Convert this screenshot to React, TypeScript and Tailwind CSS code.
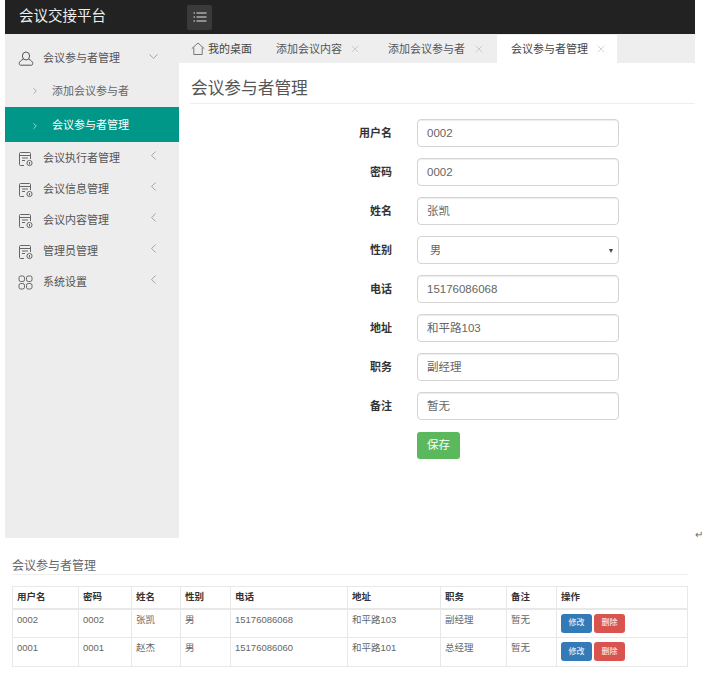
import { ChevronDown, ChevronLeft, ChevronRight, X } from 'lucide-react';

const fontStack = "font-['Liberation_Sans','Noto_Sans_CJK_SC',sans-serif]";

const UserIcon = () => (
  <svg width="16" height="16" viewBox="0 0 16 16" fill="none" stroke="#555" strokeWidth="1">
    <ellipse cx="8" cy="5" rx="3.6" ry="4" />
    <path d="M5.4 8.2C3 9.2 1.2 10.8 1.2 12.6c0 1 .6 1.6 1.6 1.6h10.4c1 0 1.6-.6 1.6-1.6 0-1.8-1.8-3.4-4.2-4.4" />
  </svg>
);

const DocIcon = () => (
  <svg width="16" height="16" viewBox="0 0 16 16" fill="none" stroke="#666" strokeWidth="1">
    <path d="M6 14.5H2.5a1 1 0 0 1-1-1v-11a1 1 0 0 1 1-1h9a1 1 0 0 1 1 1V8" />
    <path d="M1.5 4.5h11M4 7h6M4 9.5h3" />
    <circle cx="11.5" cy="12" r="2.6" />
    <path d="M11.5 11v2.5" />
  </svg>
);

const GridIcon = () => (
  <svg width="15" height="15" viewBox="0 0 15 15" fill="none" stroke="#666" strokeWidth="1">
    <rect x="1" y="1" width="5.5" height="5.5" rx="1.8" />
    <rect x="8.5" y="1" width="5.5" height="5.5" rx="1.8" />
    <rect x="1" y="8.5" width="5.5" height="5.5" rx="1.8" />
    <rect x="8.5" y="8.5" width="5.5" height="5.5" rx="1.8" />
  </svg>
);

const HomeIcon = () => (
  <svg width="14" height="14" viewBox="0 0 14 14" fill="none" stroke="#777" strokeWidth="1">
    <path d="M0.8 6.6 7 1l6.2 5.6" />
    <path d="M2.8 5.4v7.1h8.4V5.4" />
  </svg>
);

const MenuIcon = () => (
  <svg width="14" height="12" viewBox="0 0 14 12" fill="none" stroke="#e4e4e4" strokeWidth="1.2">
    <path d="M0.5 2h1.5M0.5 6h1.5M0.5 10h1.5" />
    <path d="M3.5 2h10M3.5 6h10M3.5 10h10" />
  </svg>
);

const SideRow = ({ icon, label, open }: { icon: React.ReactNode; label: string; open?: boolean }) => (
  <div className="flex h-[31px] items-center pl-[13px] pt-[2px] text-[11px] text-[#555]">
    <span className="flex w-[25px] items-center">{icon}</span>
    <span className="w-[105px] whitespace-nowrap">{label}</span>
    {open ? (
      <ChevronDown size={15} strokeWidth={1} color="#777" className="-mt-[5px] -ml-[2px]" />
    ) : (
      <ChevronLeft size={15} strokeWidth={1} color="#777" className="-mt-[7px] -ml-[2px]" />
    )}
  </div>
);

const Sidebar = () => (
  <aside className="w-[174px] h-[504px] shrink-0 bg-[#ededee]">
    <div className="pt-[8px]">
      <SideRow icon={<UserIcon />} label="会议参与者管理" open />
    </div>
    <div className="flex h-[34px] items-center pl-[25px] pt-[2px] text-[11px] text-[#666]">
      <ChevronRight size={10} strokeWidth={1.2} color="#666" />
      <span className="ml-[12px]">添加会议参与者</span>
    </div>
    <div className="flex h-[35px] items-center bg-[#009688] pl-[25px] pt-[2px] text-[11px] text-white">
      <ChevronRight size={10} strokeWidth={1.5} color="#fff" />
      <span className="ml-[12px]">会议参与者管理</span>
    </div>
    <SideRow icon={<DocIcon />} label="会议执行者管理" />
    <SideRow icon={<DocIcon />} label="会议信息管理" />
    <SideRow icon={<DocIcon />} label="会议内容管理" />
    <SideRow icon={<DocIcon />} label="管理员管理" />
    <SideRow icon={<GridIcon />} label="系统设置" />
  </aside>
);

const Tabs = () => (
  <div className="flex h-[29px] items-center bg-[#eeeeef] pt-[1px] text-[11px] text-[#444]">
    <div className="flex items-center pl-[12px] w-[97px]">
      <HomeIcon />
      <span className="ml-[3px]">我的桌面</span>
    </div>
    <div className="flex items-center w-[112px]">
      <span className="text-[#555]">添加会议内容</span>
      <X size={12} strokeWidth={1} color="#aaa" className="ml-[7px]" />
    </div>
    <div className="flex items-center w-[109px]">
      <span className="text-[#555]">添加会议参与者</span>
      <X size={12} strokeWidth={1} color="#aaa" className="ml-[8px]" />
    </div>
    <div className="flex h-full w-[120px] items-center bg-white pl-[14px]">
      <span>会议参与者管理</span>
      <X size={12} strokeWidth={1} color="#aaa" className="ml-[7px]" />
    </div>
  </div>
);

const Field = ({ label, value }: { label: string; value: string }) => (
  <div className="flex h-[28px] items-center">
    <label className="w-[213px] pt-[1px] text-right text-[11px] font-bold text-[#333]">{label}</label>
    <div className="ml-[25px] flex h-[28px] w-[202px] items-center rounded-[4px] border border-[#d4d4d4] bg-white pl-[9px] pt-[1px] text-[11.5px] text-[#666] shadow-[inset_0_1px_1px_rgba(0,0,0,0.075)]">
      {value}
    </div>
  </div>
);

const FormPanel = () => (
  <div className="mt-[15px] flex flex-col gap-[11px]">
    <Field label="用户名" value="0002" />
    <Field label="密码" value="0002" />
    <Field label="姓名" value="张凯" />
    <div className="flex h-[28px] items-center">
      <label className="w-[213px] pt-[1px] text-right text-[11px] font-bold text-[#333]">性别</label>
      <div className="ml-[25px] flex h-[28px] w-[202px] items-center justify-between rounded-[4px] border border-[#d4d4d4] bg-white pl-[12px] pr-[5px] pt-[1px] text-[11px] text-[#666]">
        <span>男</span>
        <span className="h-0 w-0 border-x-[2.5px] border-t-[4px] border-x-transparent border-t-[#444]" />
      </div>
    </div>
    <Field label="电话" value="15176086068" />
    <Field label="地址" value="和平路103" />
    <Field label="职务" value="副经理" />
    <Field label="备注" value="暂无" />
    <div className="ml-[238px] mt-[1px] flex h-[27px] w-[43px] items-center justify-center rounded-[3px] bg-[#5cb85c] text-[11.5px] text-white">
      保存
    </div>
  </div>
);

const columns = [
  { name: '用户名', w: 'w-[66px]' },
  { name: '密码', w: 'w-[53px]' },
  { name: '姓名', w: 'w-[49px]' },
  { name: '性别', w: 'w-[50px]' },
  { name: '电话', w: 'w-[117px]' },
  { name: '地址', w: 'w-[93px]' },
  { name: '职务', w: 'w-[66px]' },
  { name: '备注', w: 'w-[50px]' },
  { name: '操作', w: 'w-[131px]' },
];

const rows = [
  ['0002', '0002', '张凯', '男', '15176086068', '和平路103', '副经理', '暂无'],
  ['0001', '0001', '赵杰', '男', '15176086060', '和平路101', '总经理', '暂无'],
];

const ResultTable = () => (
  <table className="w-[675px] table-fixed border-collapse text-[9.5px] text-[#666]">
    <thead>
      <tr className="h-[22px]">
        {columns.map((c) => (
          <th key={c.name} className={`${c.w} border border-[#e8e8e8] border-b-2 pl-[4px] text-left text-[9.5px] font-bold text-[#333]`}>
            {c.name}
          </th>
        ))}
      </tr>
    </thead>
    <tbody>
      {rows.map((r) => (
        <tr key={r[0]} className="h-[29px]">
          {r.map((cell, i) => (
            <td key={i} className="border border-[#e8e8e8] pl-[4px] pt-[3px] align-top">
              {cell}
            </td>
          ))}
          <td className="border border-[#e8e8e8] pl-[4px] align-top pt-[4px]">
            <div className="flex gap-[2px]">
              <span className="flex h-[19px] w-[31px] items-center justify-center rounded-[3px] bg-[#337ab7] text-[8px] text-white">修改</span>
              <span className="flex h-[19px] w-[31px] items-center justify-center rounded-[3px] bg-[#d9534f] text-[8px] text-white">删除</span>
            </div>
          </td>
        </tr>
      ))}
    </tbody>
  </table>
);

export default function App() {
  return (
    <div className={`${fontStack} relative h-[682px] w-[707px] overflow-hidden bg-white`}>
      <div className="ml-[5px] w-[690px]">
        {/* Top bar */}
        <header className="flex h-[34px] items-center bg-[#222]">
          <div className="w-[182px] pl-[14px] text-[14.5px] text-[#eee]">会议交接平台</div>
          <div className="flex h-[25px] w-[25px] items-center justify-center rounded-[2px] bg-[#3a3a3a]">
            <MenuIcon />
          </div>
        </header>

        <div className="flex">
          <Sidebar />
          <main className="min-w-0 flex-1">
            <Tabs />
            <div className="ml-[11px] mt-[13px] h-[28px] border-b border-[#eee] pl-[1px] text-[16.7px] leading-[26px] text-[#555]">
              会议参与者管理
            </div>
            <FormPanel />
          </main>
        </div>
      </div>

      <span className="absolute left-[695px] top-[527px] text-[10px] text-[#666]">↵</span>

      {/* Saved table below */}
      <div className="ml-[12px] mt-[20px] w-[676px]">
        <div className="h-[17px] border-b border-[#eee] text-[12px] leading-[17px] text-[#666]">会议参与者管理</div>
        <div className="mt-[11px]">
          <ResultTable />
        </div>
      </div>
    </div>
  );
}
